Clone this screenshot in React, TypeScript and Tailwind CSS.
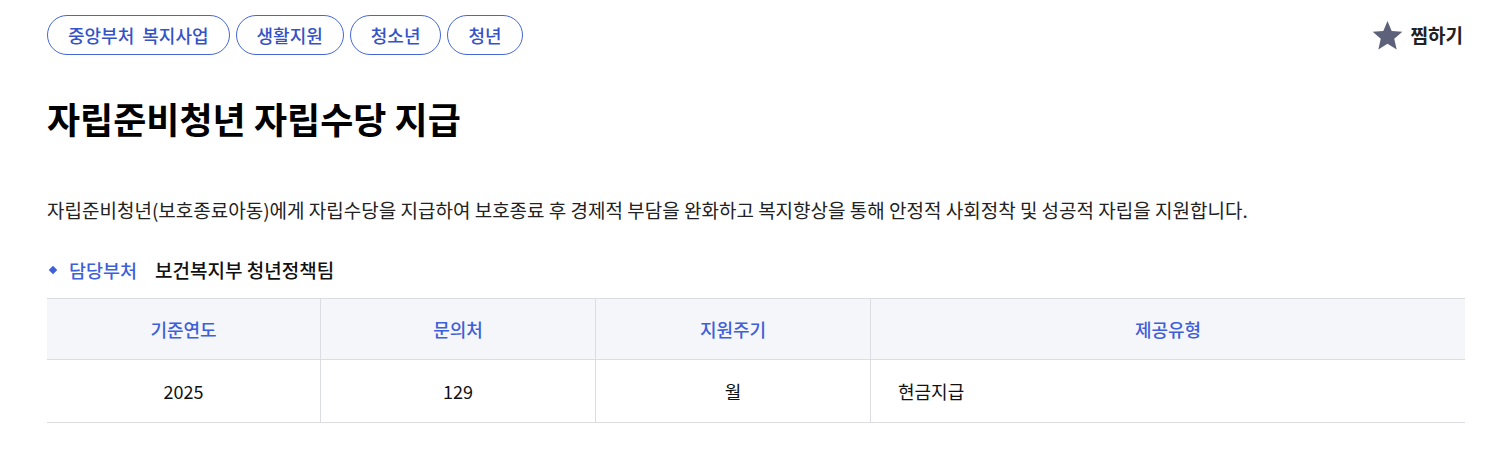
import React from "react";

const tags = ["중앙부처 복지사업", "생활지원", "청소년", "청년"];

export default function App() {
  return (
    <div
      className="w-[1505px] h-[458px] bg-white text-[#111] pl-[47px] pr-[40px]"
      style={{ fontFamily: '"Noto Sans CJK KR", "Noto Sans", sans-serif' }}
    >
      <div className="flex items-center justify-between pt-[15px]">
        <div className="flex gap-[6px]">
          {tags.map((t) => (
            <span
              key={t}
              className="h-[40px] flex items-center pl-[20px] pr-[20px] rounded-full border border-[#4566d8] text-[#3553c8] text-[18px] font-medium [word-spacing:4px]"
            >
              {t}
            </span>
          ))}
        </div>
        <button className="flex items-center gap-[7px] text-[19px] font-bold text-[#222] mr-[2px]">
          <svg width="33" height="31" viewBox="0 0 24 23" className="block">
            <path
              d="M12 0.8l3.1 7.3 7.9 0.7-6 5.2 1.8 7.8L12 17.7 5.2 21.8 7 14 1 8.8l7.9-0.7z"
              fill="#5d6179"
            />
          </svg>
          찜하기
        </button>
      </div>

      <h1 className="mt-[39px] text-[36px] leading-[48px] font-bold text-black">
        자립준비청년 자립수당 지급
      </h1>

      <p className="mt-[54px] text-[19px] leading-[28px] text-[#222]">
        자립준비청년(보호종료아동)에게 자립수당을 지급하여 보호종료 후 경제적 부담을 완화하고 복지향상을 통해 안정적 사회정착 및 성공적 자립을 지원합니다.
      </p>

      <div className="mt-[33px] flex items-center leading-[26px]">
        <span className="w-[6px] h-[6px] bg-[#3d5fd9] rotate-45 ml-[3px] mr-[13px]" />
        <span className="text-[#3d5fd9] font-medium text-[18.5px]">담당부처</span>
        <span className="ml-[18px] font-medium text-[#111] text-[19px]">보건복지부 청년정책팀</span>
      </div>

      <div className="mt-[15px] w-[1418px] border-t border-b border-[#dcdde2] text-[18px]">
        <div className="grid grid-cols-[274px_275px_275px_1fr] bg-[#f5f6fa] border-b border-[#dcdde2] h-[61px]">
          {["기준연도", "문의처", "지원주기", "제공유형"].map((h, i) => (
            <div
              key={h}
              className={`flex items-center justify-center text-[#3d5fd9] font-medium ${i < 3 ? "border-r border-[#dcdde2]" : ""}`}
            >
              {h}
            </div>
          ))}
        </div>
        <div className="grid grid-cols-[274px_275px_275px_1fr] h-[62px]">
          <div className="flex items-center justify-center border-r border-[#dcdde2]">2025</div>
          <div className="flex items-center justify-center border-r border-[#dcdde2]">129</div>
          <div className="flex items-center justify-center border-r border-[#dcdde2]">월</div>
          <div className="flex items-center pl-[27px]">현금지급</div>
        </div>
      </div>
    </div>
  );
}
